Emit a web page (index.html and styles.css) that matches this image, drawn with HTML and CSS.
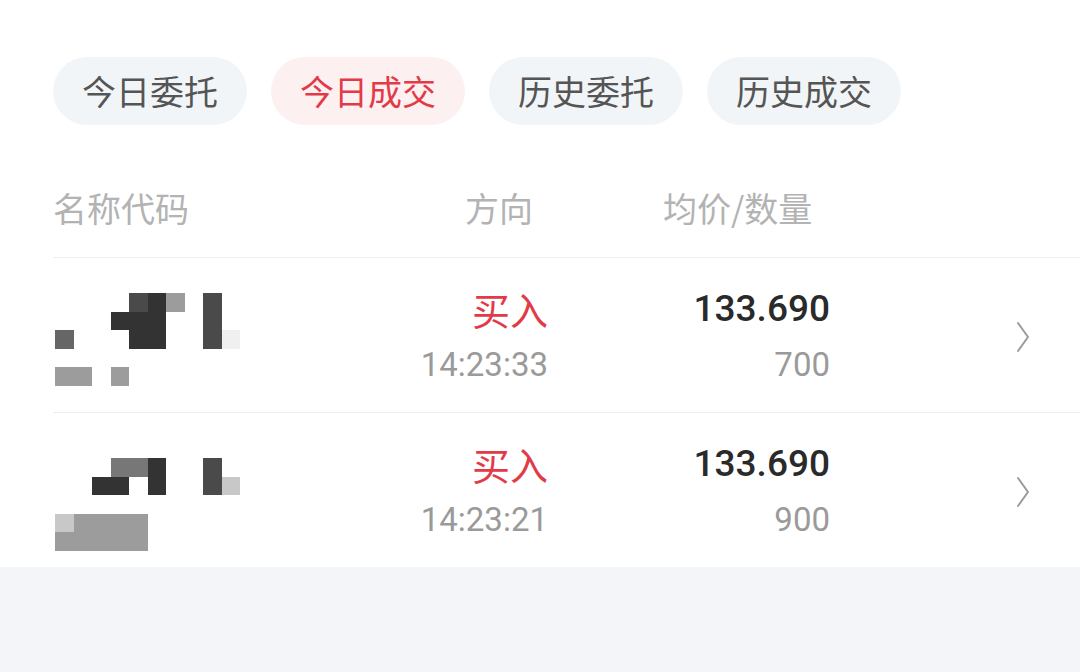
FILE: index.html
```html
<!DOCTYPE html>
<html lang="zh-CN">
<head>
    <meta charset="UTF-8">
    <meta name="viewport" content="width=device-width, initial-scale=1.0">
    <title>今日成交</title>
    <link rel="stylesheet" href="styles.css">
</head>
<body>
    <div class="page">
        <div class="tabs">
            <div class="tab">今日委托</div>
            <div class="tab active">今日成交</div>
            <div class="tab">历史委托</div>
            <div class="tab">历史成交</div>
        </div>

        <div class="list-head">
            <div class="head-name">名称代码</div>
            <div class="head-dir">方向</div>
            <div class="head-price">均价/数量</div>
        </div>

        <div class="list">
            <div class="row">
                <div class="name"><div class="mosaic first" data-map="....bae.b..|...aaa..b..|c...aa..bg.|...........|ee.e......."></div></div>
                <div class="dir">
                    <div class="side buy">买入</div>
                    <div class="sub">14:23:33</div>
                </div>
                <div class="price">
                    <div class="avg">133.690</div>
                    <div class="sub">700</div>
                </div>
                <div class="more">
                    <svg width="14" height="32" viewBox="0 0 14 32"><path d="M2 2 L12 16 L2 30" fill="none" stroke="#9a9a9a" stroke-width="2" stroke-linecap="round" stroke-linejoin="round"/></svg>
                </div>
            </div>
            <div class="row">
                <div class="name"><div class="mosaic second" data-map="...dda..b..|..aa.a..bf.|...........|feeee......|eeeee......"></div></div>
                <div class="dir">
                    <div class="side buy">买入</div>
                    <div class="sub">14:23:21</div>
                </div>
                <div class="price">
                    <div class="avg">133.690</div>
                    <div class="sub">900</div>
                </div>
                <div class="more">
                    <svg width="14" height="32" viewBox="0 0 14 32"><path d="M2 2 L12 16 L2 30" fill="none" stroke="#9a9a9a" stroke-width="2" stroke-linecap="round" stroke-linejoin="round"/></svg>
                </div>
            </div>
        </div>
    </div>
    <div class="footer"></div>

    <script>
        // build the blurred stock name blocks from their maps
        document.querySelectorAll(".mosaic").forEach(function (box) {
            box.dataset.map.split("|").forEach(function (line) {
                for (let ch of line) {
                    let cell = document.createElement("div");
                    cell.className = ch === "." ? "cell" : "cell m-" + ch;
                    box.appendChild(cell);
                }
            });
        });
    </script>
</body>
</html>
```

FILE: styles.css
```css
html {
    background-color: #f4f5f8;
}

body {
    margin: 0;
    font-family: 'Noto Sans CJK SC', 'Noto Sans', sans-serif;
    color: #333;
}

.page {
    background-color: #ffffff;
}

.tabs {
    display: flex;
    gap: 24px;
    padding: 57px 53px 0;
}

.tab {
    height: 68px;
    line-height: 68px;
    padding: 0 29px;
    border-radius: 34px;
    background-color: #f2f5f8;
    color: #555;
    font-size: 34px;
}

.tab.active {
    background-color: #fdf0f0;
    color: #e23a48;
}

.list-head {
    display: grid;
    grid-template-columns: 247px 233px 1fr;
    align-items: center;
    height: 100px;
    margin-top: 32px;
    padding-left: 53px;
    color: #b3b3b3;
    font-size: 34px;
}

.head-dir {
    text-align: right;
}

.head-price {
    padding-left: 130px;
}

.list {
    padding-left: 53px;
}

.row {
    display: grid;
    grid-template-columns: 247px 248px 282px 1fr;
    height: 155px;
    box-sizing: border-box;
    border-top: 1px solid #eeeeee;
    padding-top: 23px;
}

.dir, .price {
    text-align: right;
}

.side {
    height: 56px;
    line-height: 56px;
    font-size: 38px;
}

.buy {
    color: #e23a48;
}

.avg {
    height: 56px;
    line-height: 56px;
    font-family: 'Roboto', sans-serif;
    font-weight: 500;
    font-size: 37px;
    color: #2a2a2a;
}

.sub {
    height: 56px;
    line-height: 56px;
    font-family: 'Roboto', sans-serif;
    font-size: 33px;
    color: #9a9a9a;
}

.more {
    display: flex;
    justify-content: flex-end;
    align-items: flex-start;
    padding: 40px 50px 0 0;
}

.mosaic {
    display: grid;
    grid-template-columns: repeat(11, 18.5px);
    grid-auto-rows: 18.5px;
    margin-left: 2px;
}

.mosaic.first {
    margin-top: 12px;
}

.mosaic.second {
    margin-top: 22px;
}

.m-a { background-color: #333; }
.m-b { background-color: #4a4a4a; }
.m-c { background-color: #666; }
.m-d { background-color: #777; }
.m-e { background-color: #9c9c9c; }
.m-f { background-color: #c8c8c8; }
.m-g { background-color: #f0f0f0; }

.footer {
    height: 105px;
}
```
